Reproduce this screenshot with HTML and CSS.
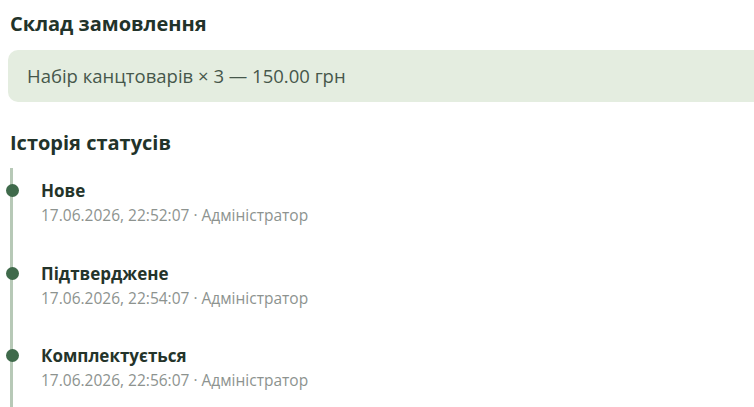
FILE: index.html
```html
<!DOCTYPE html>
<html lang="uk">
<head>
<meta charset="utf-8">
<link rel="stylesheet" href="styles.css">
</head>
<body>
<main class="order">
  <section class="block">
    <h2 class="block-title">Склад замовлення</h2>
    <div class="items">
      <div class="item">Набір канцтоварів × 3 — 150.00 грн</div>
    </div>
  </section>
  <section class="block history">
    <h2 class="block-title">Історія статусів</h2>
    <ol class="timeline">
      <li class="event">
        <span class="dot"></span>
        <div class="event-title">Нове</div>
        <div class="event-meta">17.06.2026, 22:52:07 · Адміністратор</div>
      </li>
      <li class="event">
        <span class="dot"></span>
        <div class="event-title">Підтверджене</div>
        <div class="event-meta">17.06.2026, 22:54:07 · Адміністратор</div>
      </li>
      <li class="event">
        <span class="dot"></span>
        <div class="event-title">Комплектується</div>
        <div class="event-meta">17.06.2026, 22:56:07 · Адміністратор</div>
      </li>
    </ol>
  </section>
</main>
</body>
</html>
```
FILE: styles.css
```css
html, body {
  margin: 0;
  padding: 0;
  background: #ffffff;
  overflow: hidden;
}
body {
  font-family: "Open Sans", "Noto Sans", sans-serif;
  color: #26352b;
}
.order {
  width: 800px;
  padding: 11px 0 0 10px;
}
.block-title {
  margin: 0;
  font-size: 20px;
  font-weight: 700;
  line-height: 26px;
  color: #22332a;
}
.items {
  margin-top: 13px;
  margin-left: -2px;
  background: #e4ede0;
  border-radius: 10px;
  padding: 13px 19px;
}
.item {
  font-size: 18.5px;
  line-height: 26px;
  color: #46574b;
}
.history {
  margin-top: 28px;
}
.timeline {
  list-style: none;
  margin: 12px 0 0 0;
  padding: 0 0 0 28px;
  border-left: 3px solid #b7c9b7;
}
.event {
  position: relative;
  padding-top: 12px;
  height: 82.5px;
  box-sizing: border-box;
}
.dot {
  position: absolute;
  left: -35.5px;
  top: 16px;
  width: 13px;
  height: 13px;
  border-radius: 50%;
  background: #3f6a4b;
}
.event-title {
  font-size: 17px;
  font-weight: 700;
  line-height: 22px;
  color: #24342a;
}
.event-meta {
  margin-top: 3px;
  font-size: 15.5px;
  line-height: 20px;
  color: #8d938f;
}
```
